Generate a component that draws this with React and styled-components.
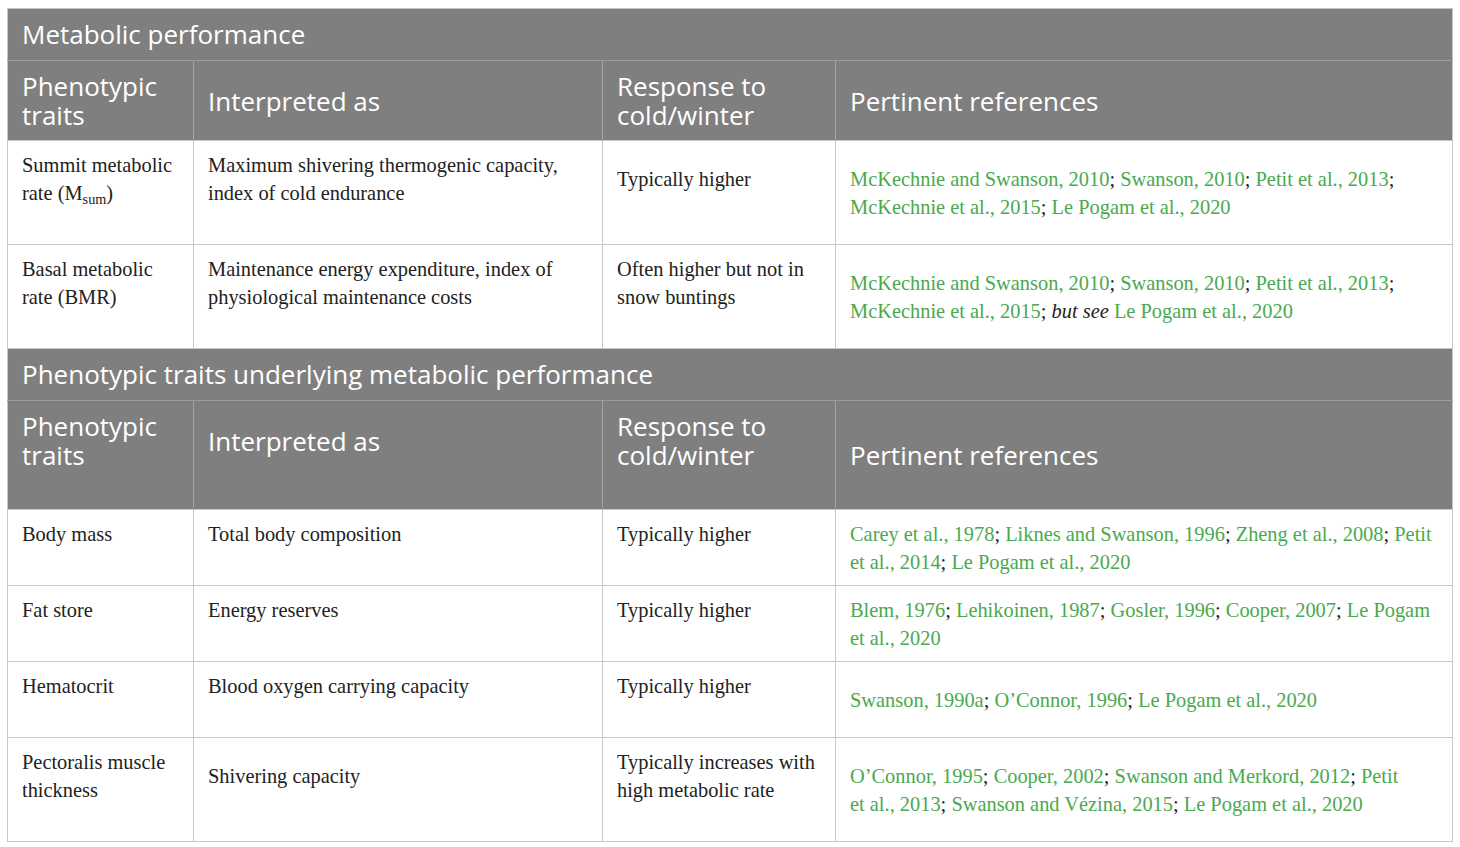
import React from 'react';
import styled, { createGlobalStyle } from 'styled-components';

const GlobalStyle = createGlobalStyle`
  body {
    margin: 0;
    background: #fff;
  }
`;

const Page = styled.div`
  padding: 8px 0 0 7px;
`;

const Table = styled.table`
  width: 1445px;
  table-layout: fixed;
  border-collapse: collapse;
  border: 1px solid #c4c4c4;
`;

const SectionCell = styled.th`
  background: #7f7f7f;
  color: #fff;
  font-family: 'Open Sans', 'Liberation Sans', sans-serif;
  font-size: 26px;
  font-weight: 400;
  line-height: 29px;
  text-align: left;
  padding: 11px 14px 11px;
  border-bottom: 1px solid #9d9d9d;
`;

const HeadCell = styled.th`
  background: #7f7f7f;
  color: #fff;
  font-family: 'Open Sans', 'Liberation Sans', sans-serif;
  font-size: 26px;
  font-weight: 400;
  line-height: 29px;
  text-align: left;
  vertical-align: middle;
  padding: 11px 14px ${p => (p.$extra ? '39px' : '10px')};
  border-left: 1px solid #a3a3a3;
  white-space: pre-line;
  &:first-child {
    border-left: none;
  }
`;

const Cell = styled.td`
  font-family: 'Liberation Serif', 'Times New Roman', serif;
  font-size: 20.4px;
  line-height: 28px;
  color: #222;
  vertical-align: middle;
  padding: 10px 14px ${p => (p.$refs ? '9px' : '37px')};
  border: 1px solid #c8c8c8;
  white-space: pre;
`;

const Sub = styled.span`
  font-size: 0.7em;
  line-height: 0;
  position: relative;
  top: 0.3em;
`;

const Ref = styled.span`
  color: #4aa94e;
`;

const Em = styled.i`
  color: #222;
`;

const sections = [
  {
    title: 'Metabolic performance',
    extraHead: false,
    rows: [
      {
        trait: ['Summit metabolic', <>rate (M<Sub>sum</Sub>)</>],
        meaning: 'Maximum shivering thermogenic capacity,\nindex of cold endurance',
        response: 'Typically higher',
        refs: [
          '{McKechnie and Swanson, 2010}; {Swanson, 2010}; {Petit et al., 2013};',
          '{McKechnie et al., 2015}; {Le Pogam et al., 2020}',
        ],
      },
      {
        trait: ['Basal metabolic', 'rate (BMR)'],
        meaning: 'Maintenance energy expenditure, index of\nphysiological maintenance costs',
        response: 'Often higher but not in\nsnow buntings',
        refs: [
          '{McKechnie and Swanson, 2010}; {Swanson, 2010}; {Petit et al., 2013};',
          '{McKechnie et al., 2015}; _but see_ {Le Pogam et al., 2020}',
        ],
      },
    ],
  },
  {
    title: 'Phenotypic traits underlying metabolic performance',
    extraHead: true,
    rows: [
      {
        trait: ['Body mass'],
        meaning: 'Total body composition',
        response: 'Typically higher',
        refs: [
          '{Carey et al., 1978}; {Liknes and Swanson, 1996}; {Zheng et al., 2008}; {Petit}',
          '{et al., 2014}; {Le Pogam et al., 2020}',
        ],
      },
      {
        trait: ['Fat store'],
        meaning: 'Energy reserves',
        response: 'Typically higher',
        refs: [
          '{Blem, 1976}; {Lehikoinen, 1987}; {Gosler, 1996}; {Cooper, 2007}; {Le Pogam}',
          '{et al., 2020}',
        ],
      },
      {
        trait: ['Hematocrit'],
        meaning: 'Blood oxygen carrying capacity',
        response: 'Typically higher',
        refs: ['{Swanson, 1990a}; {O\u2019Connor, 1996}; {Le Pogam et al., 2020}'],
      },
      {
        trait: ['Pectoralis muscle', 'thickness'],
        meaning: 'Shivering capacity',
        response: 'Typically increases with\nhigh metabolic rate',
        refs: [
          '{O\u2019Connor, 1995}; {Cooper, 2002}; {Swanson and Merkord, 2012}; {Petit}',
          '{et al., 2013}; {Swanson and V\u00e9zina, 2015}; {Le Pogam et al., 2020}',
        ],
      },
    ],
  },
];

const renderLine = line =>
  line.split(/(\{[^}]*\}|_[^_]*_)/).filter(Boolean).map((part, i) => {
    if (part.startsWith('{')) return <Ref key={i}>{part.slice(1, -1)}</Ref>;
    if (part.startsWith('_')) return <Em key={i}>{part.slice(1, -1)}</Em>;
    return <React.Fragment key={i}>{part}</React.Fragment>;
  });

const Lines = ({ lines }) =>
  lines.map((l, i) => (
    <React.Fragment key={i}>
      {i > 0 && <br />}
      {typeof l === 'string' ? renderLine(l) : l}
    </React.Fragment>
  ));

const Section = ({ title, extraHead, rows }) => (
  <>
    <tr>
      <SectionCell colSpan={4}>{title}</SectionCell>
    </tr>
    <tr>
      <HeadCell $extra={extraHead}>{'Phenotypic\ntraits'}</HeadCell>
      <HeadCell $extra={extraHead}>Interpreted as</HeadCell>
      <HeadCell $extra={extraHead}>{'Response to\ncold/winter'}</HeadCell>
      <HeadCell>Pertinent references</HeadCell>
    </tr>
    {rows.map((r, i) => (
      <tr key={i}>
        <Cell>
          <Lines lines={r.trait} />
        </Cell>
        <Cell>
          <Lines lines={r.meaning.split('\n')} />
        </Cell>
        <Cell>
          <Lines lines={r.response.split('\n')} />
        </Cell>
        <Cell $refs>
          <Lines lines={r.refs} />
        </Cell>
      </tr>
    ))}
  </>
);

const App = () => (
  <Page>
    <GlobalStyle />
    <Table>
      <colgroup>
        <col style={{ width: 186 }} />
        <col style={{ width: 409 }} />
        <col style={{ width: 233 }} />
        <col style={{ width: 617 }} />
      </colgroup>
      <tbody>
        {sections.map((s, i) => (
          <Section key={i} {...s} />
        ))}
      </tbody>
    </Table>
  </Page>
);

export default App;
